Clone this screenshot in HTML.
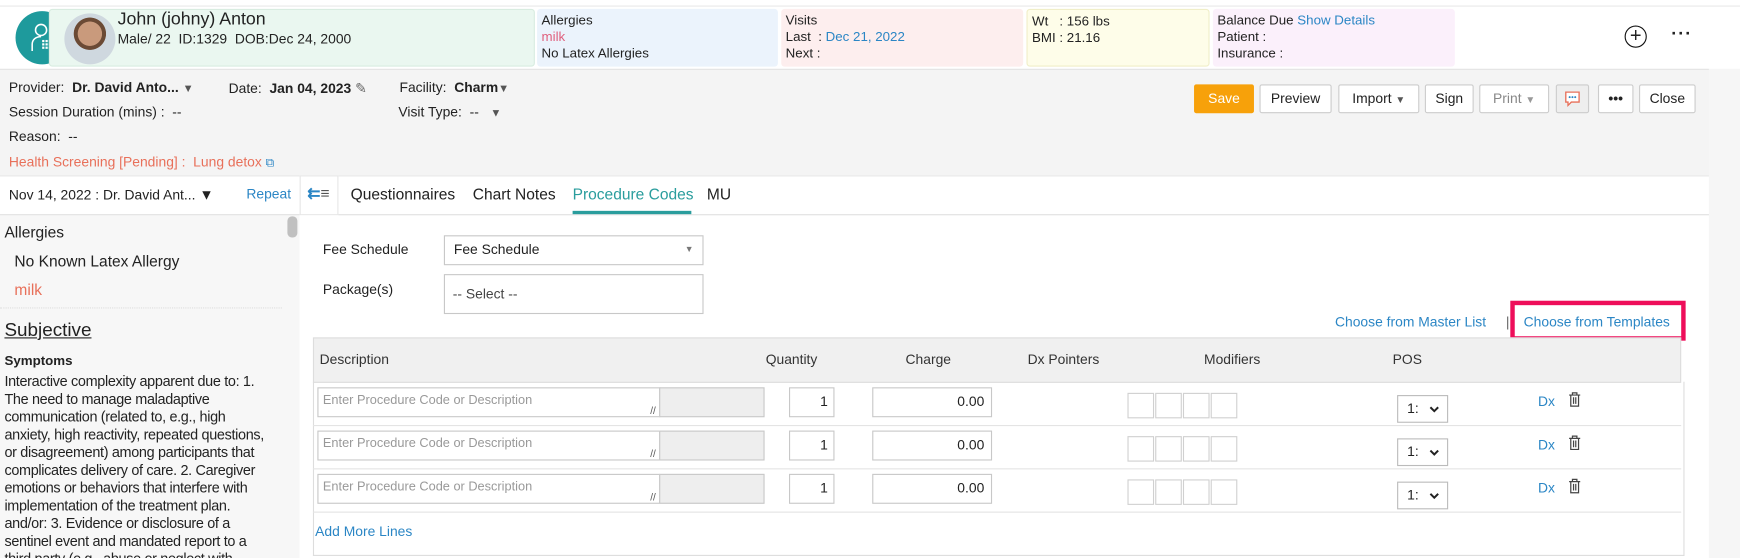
<!DOCTYPE html>
<html><head><meta charset="utf-8"><style>
*{box-sizing:border-box;margin:0;padding:0}
html,body{width:1740px;height:558px;overflow:hidden;background:#fff}
#w{position:absolute;left:0;top:0;width:1568px;height:503px;overflow:hidden;transform:scale(1.1097);transform-origin:0 0;font-family:"Liberation Sans",sans-serif;font-size:12.5px;color:#222}
.a{position:absolute;white-space:nowrap}
.box{position:absolute;top:8px;height:52px;border-radius:3px;padding:3px 4px;line-height:15px;font-size:12px}
.blue{color:#2b86c5}
.btn{position:absolute;top:76px;height:26px;border:1px solid #ccc;background:#fff;border-radius:2px;font-size:12.5px;line-height:24px;text-align:center;color:#222}
.inp{position:absolute;border:1px solid #c8c8c8;background:#fff;white-space:nowrap}
.th{position:absolute;top:317px;font-size:12.5px;color:#333}
.ph{color:#999;font-size:11.5px;padding:5px 4px}
</style></head><body><div id="w">
<div class="a" style="left:0;top:0;width:1568px;height:6px;background:#fff;border-bottom:1px solid #e6e6e6"></div>
<div class="a" style="left:0;top:6px;width:1568px;height:56px;background:#fff"></div>
<div class="a" style="left:14px;top:10px;width:48px;height:48px;border-radius:50%;background:#1e9a9c"></div>
<svg class="a" style="left:26px;top:20px" width="24" height="28" viewBox="0 0 24 28" fill="none" stroke="#fff" stroke-width="1.4"><circle cx="11" cy="7" r="5"/><path d="M3 26v-6c0-4 3-7 8-7"/><g fill="#fff" stroke="none"><rect x="12" y="16" width="2" height="2"/><rect x="15" y="16" width="2" height="2"/><rect x="18" y="16" width="2" height="2"/><rect x="12" y="19" width="2" height="2"/><rect x="15" y="19" width="2" height="2"/><rect x="18" y="19" width="2" height="2"/><rect x="12" y="22" width="2" height="2"/><rect x="15" y="22" width="2" height="2"/><rect x="18" y="22" width="2" height="2"/></g></svg>
<div class="box" style="left:44px;width:438px;background:#eaf7f0;border:1px solid #d8ece0"></div>
<div class="a" style="left:58px;top:12px;width:46px;height:46px;border-radius:50%;background:radial-gradient(circle at 50% 40%,#c99a7c 0 30%,#6b4a35 31% 40%,#cfd8df 41%)"></div>
<div class="a" style="left:106px;top:9px;font-size:16px">John (johny) Anton</div>
<div class="a" style="left:106px;top:28px;font-size:12.5px">Male/ 22 &nbsp;ID:1329 &nbsp;DOB:Dec 24, 2000</div>
<div class="box" style="left:484px;width:217px;background:#ebf3fc">Allergies<br><span style="color:#e0607e">milk</span><br>No Latex Allergies</div>
<div class="box" style="left:704px;width:218px;background:#fdeeee">Visits<br>Last &nbsp;: <span class="blue">Dec 21, 2022</span><br>Next :</div>
<div class="box" style="left:925px;width:165px;background:#fefde9;border:1px solid #f0eec8">Wt &nbsp;&nbsp;: 156 lbs<br>BMI : 21.16</div>
<div class="box" style="left:1093px;width:218px;background:#fbf0fb">Balance Due <span class="blue">Show Details</span><br>Patient :<br>Insurance :</div>
<div class="a" style="left:1464px;top:23px;width:20px;height:20px;border:1.6px solid #111;border-radius:50%;text-align:center;line-height:16px;font-size:18px">+</div>
<div class="a" style="left:1506px;top:22px;font-size:16px;font-weight:bold;letter-spacing:1px">···</div>
<div class="a" style="left:0;top:62px;width:1540px;height:96px;background:#f4f4f4;border-top:1px solid #e4e4e4"></div>
<div class="a" style="left:1540px;top:62px;width:28px;height:441px;background:#f6f6f6"></div>
<div class="a" style="left:8px;top:72px">Provider: &nbsp;<b>Dr. David Anto...</b> <span style="font-size:10px;color:#555">▼</span></div>
<div class="a" style="left:206px;top:72px">Date: &nbsp;<b>Jan 04, 2023</b> <span style="color:#666">✎</span></div>
<div class="a" style="left:360px;top:72px">Facility: &nbsp;<b>Charm</b><span style="font-size:10px;color:#555">▼</span></div>
<div class="a" style="left:8px;top:94px">Session Duration (mins) : &nbsp;--</div>
<div class="a" style="left:359px;top:94px">Visit Type: &nbsp;-- &nbsp;&nbsp;<span style="font-size:10px;color:#555">▼</span></div>
<div class="a" style="left:8px;top:116px">Reason: &nbsp;--</div>
<div class="a" style="left:8px;top:139px;color:#e8705a">Health Screening [Pending] : &nbsp;Lung detox <span class="blue" style="font-size:11px">⧉</span></div>
<div class="btn" style="left:1076px;width:54px;background:#f7a10a;border-color:#f7a10a;color:#fff">Save</div>
<div class="btn" style="left:1135px;width:65px">Preview</div>
<div class="btn" style="left:1206px;width:73px">Import <span style="font-size:9px;color:#555">▼</span></div>
<div class="btn" style="left:1284px;width:44px">Sign</div>
<div class="btn" style="left:1333px;width:63px;color:#888">Print <span style="font-size:9px;color:#999">▼</span></div>
<div class="btn" style="left:1402px;width:30px;background:#eee"><svg width="16" height="16" viewBox="0 0 16 16" style="margin-top:4px"><path d="M2 2h12v9H7l-3 3v-3H2z" fill="#fff" stroke="#e8705a" stroke-width="1.2"/><g fill="#2b86c5"><circle cx="5.5" cy="6.5" r=".9"/><circle cx="8" cy="6.5" r=".9"/><circle cx="10.5" cy="6.5" r=".9"/></g></svg></div>
<div class="btn" style="left:1440px;width:32px;font-weight:bold">•••</div>
<div class="btn" style="left:1477px;width:51px">Close</div>
<div class="a" style="left:0;top:158px;width:270px;height:345px;background:#f7f7f7"></div>
<div class="a" style="left:0;top:158px;width:270px;height:36px;background:#fff;border-bottom:1px solid #e0e0e0;border-top:1px solid #e6e6e6"></div>
<div class="a" style="left:8px;top:168px">Nov 14, 2022 : Dr. David Ant... <span style="font-size:13px">▼</span></div>
<div class="a blue" style="left:222px;top:168px">Repeat</div>
<div class="a" style="left:270px;top:158px;width:35px;height:36px;background:#fff;border:1px solid #e6e6e6"></div>
<div class="a blue" style="left:277px;top:166px;font-size:14px;font-weight:bold">⇇<span style="color:#555;font-weight:normal">≡</span></div>
<div class="a" style="left:270px;top:194px;width:35px;height:309px;background:#fff"></div>
<div class="a" style="left:305px;top:158px;width:1235px;height:36px;background:#fff;border-top:1px solid #e6e6e6;border-bottom:1px solid #e0e0e0"></div>
<div class="a" style="left:316px;top:167px;font-size:14px">Questionnaires</div>
<div class="a" style="left:426px;top:167px;font-size:14px">Chart Notes</div>
<div class="a" style="left:516px;top:167px;font-size:14px;color:#2a9d9d">Procedure Codes</div>
<div class="a" style="left:516px;top:190px;width:107px;height:3px;background:#2a9d9d"></div>
<div class="a" style="left:637px;top:167px;font-size:14px">MU</div>
<div class="a" style="left:259px;top:195px;width:9px;height:19px;border-radius:4px;background:#c0c0c0"></div>
<div class="a" style="left:4px;top:201px;font-size:14px">Allergies</div>
<div class="a" style="left:13px;top:227px;font-size:14px">No Known Latex Allergy</div>
<div class="a" style="left:13px;top:253px;font-size:14px;color:#e8705a">milk</div>
<div class="a" style="left:0;top:277px;width:254px;border-top:1px dotted #ddd"></div>
<div class="a" style="left:4px;top:288px;font-size:17px;text-decoration:underline">Subjective</div>
<div class="a" style="left:4px;top:318px;font-size:12px;font-weight:bold">Symptoms</div>
<div class="a" style="left:4px;top:336px;font-size:13px;letter-spacing:-0.3px;line-height:16px">Interactive complexity apparent due to: 1.<br>The need to manage maladaptive<br>communication (related to, e.g., high<br>anxiety, high reactivity, repeated questions,<br>or disagreement) among participants that<br>complicates delivery of care. 2. Caregiver<br>emotions or behaviors that interfere with<br>implementation of the treatment plan.<br>and/or: 3. Evidence or disclosure of a<br>sentinel event and mandated report to a<br>third party (e.g., abuse or neglect with</div>
<div class="a" style="left:291px;top:218px">Fee Schedule</div>
<div class="inp" style="left:400px;top:212px;width:234px;height:27px;padding:5px 8px">Fee Schedule<span style="position:absolute;right:8px;top:7px;font-size:8px;color:#777">▼</span></div>
<div class="a" style="left:291px;top:254px">Package(s)</div>
<div class="inp" style="left:400px;top:247px;width:234px;height:36px;padding:10px 7px;color:#444">-- Select --</div>
<div class="a blue" style="left:1203px;top:283px">Choose from Master List</div>
<div class="a" style="left:1357px;top:283px;color:#666">|</div>
<div class="a" style="left:1361px;top:271px;width:158px;height:36px;border:4px solid #ee0e5a"></div>
<div class="a blue" style="left:1373px;top:283px">Choose from Templates</div>
<div class="a" style="left:282px;top:304px;width:1233px;height:41px;background:#f0f0f0;border:1px solid #ddd"></div>
<div class="th" style="left:288px">Description</div>
<div class="th" style="left:690px">Quantity</div>
<div class="th" style="left:816px">Charge</div>
<div class="th" style="left:926px">Dx Pointers</div>
<div class="th" style="left:1085px">Modifiers</div>
<div class="th" style="left:1255px">POS</div>
<div class="a" style="left:282px;top:344px;width:1236px;height:157px;border:1px solid #ddd;border-top:none"></div>
<div class="a" style="left:282px;top:383px;width:1233px;border-top:1px solid #e4e4e4"></div>
<div class="a" style="left:282px;top:422px;width:1233px;border-top:1px solid #e4e4e4"></div>
<div class="a" style="left:282px;top:461px;width:1233px;border-top:1px solid #e4e4e4"></div>
<div id="rows"></div>
<div class="a blue" style="left:284px;top:472px">Add More Lines</div>
</div>
<script>
var h='';[0,39,78].forEach(function(d){var t=349+d;
h+='<div class="inp ph" style="left:286px;top:'+t+'px;width:309px;height:27px">Enter Procedure Code or Description<span style="position:absolute;right:3px;bottom:0;font-size:9px;color:#555">//</span></div>';
h+='<div class="inp" style="left:594px;top:'+t+'px;width:95px;height:27px;background:#eee"></div>';
h+='<div class="inp" style="left:711px;top:'+t+'px;width:41px;height:27px;text-align:right;padding:5px 5px">1</div>';
h+='<div class="inp" style="left:786px;top:'+t+'px;width:108px;height:27px;text-align:right;padding:5px 6px">0.00</div>';
for(var i=0;i<4;i++)h+='<div class="inp" style="left:'+(1016+i*25)+'px;top:'+(t+5)+'px;width:24px;height:23px;border-color:#d0d0d0"></div>';
h+='<div class="inp" style="left:1259px;top:'+(t+7)+'px;width:46px;height:25px;border-color:#bbb;padding:4px 8px">1:<svg style="position:absolute;right:7px;top:9px" width="9" height="6" viewBox="0 0 9 6"><path d="M1 1l3.5 3.5L8 1" fill="none" stroke="#222" stroke-width="1.8"/></svg></div>';
h+='<div class="a blue" style="left:1386px;top:'+(t+6)+'px">Dx</div>';
h+='<svg class="a" style="left:1413px;top:'+(t+4)+'px" width="12" height="14" viewBox="0 0 12 14" fill="none" stroke="#444" stroke-width="1.1"><path d="M1 3h10M4 3V1h4v2M2.5 3v10h7V3M5 5v6M7 5v6"/></svg>';});
document.getElementById('rows').outerHTML=h;
</script>
</body></html>
